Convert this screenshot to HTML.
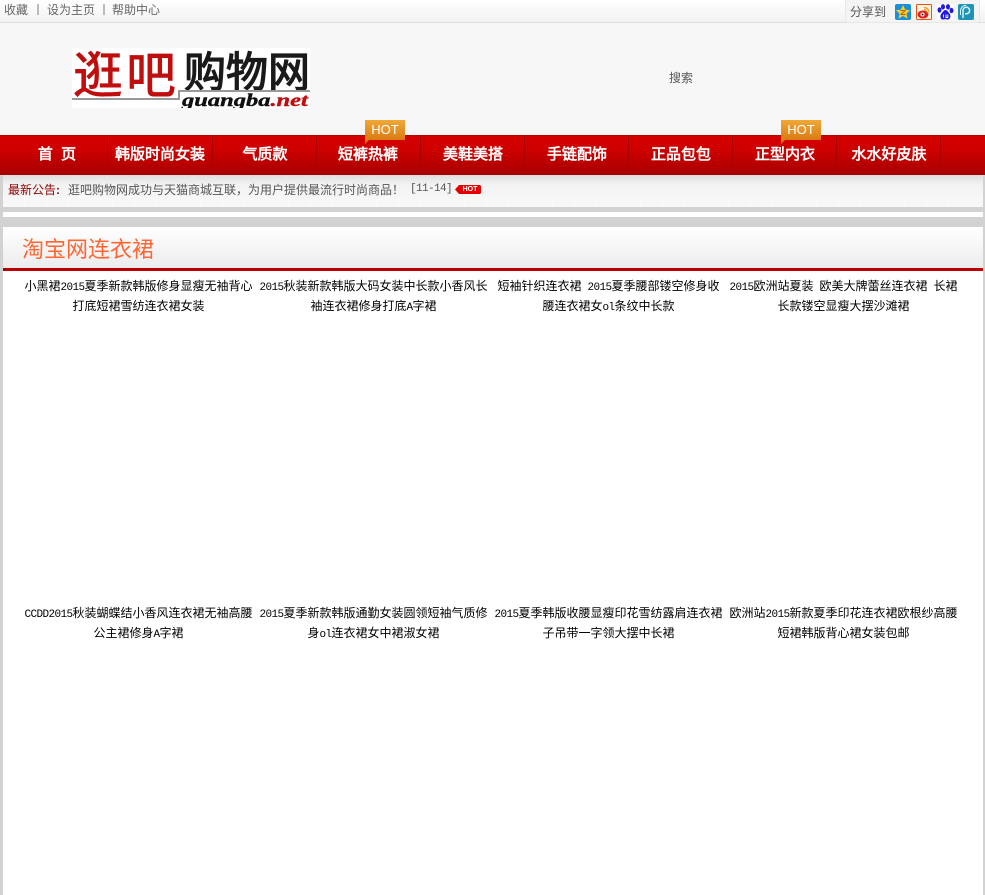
<!DOCTYPE html>
<html><head><meta charset="utf-8"><title>淘宝网连衣裙</title>
<style>
*{margin:0;padding:0;box-sizing:border-box}
html,body{width:985px;height:895px;overflow:hidden;background:#d2d2d2}
body{position:relative;font:12px/20px "WenQuanYi Zen Hei",sans-serif;color:#555}
.a{position:absolute;white-space:nowrap}
.m{font-family:"Liberation Mono",monospace;font-size:11px;letter-spacing:-.6px;line-height:0}
#top{left:0;top:0;width:985px;height:23px;background:linear-gradient(#fff,#f2f2f2);border-bottom:1px solid #ddd}
#head{left:0;top:23px;width:985px;height:112px;background:#f7f7f7}
#nav{left:0;top:135px;width:985px;height:40px;background:linear-gradient(#d40000 0,#cf0000 35%,#a80000 100%);border-top:1px solid #b80000;border-bottom:1px solid #a00}
.n{position:absolute;top:135px;height:40px;width:104px;text-align:center;color:#fff;font-weight:bold;font-size:15px;line-height:39px;white-space:nowrap}
.s{position:absolute;top:136px;width:1px;height:38px;background:#a80000}
.hot{position:absolute;top:120px;width:40px;height:20px;background:linear-gradient(#f0a838,#dc7a12);color:#fff;font:13px/20px "Liberation Sans",sans-serif;text-align:center}
.hot:after{content:"";position:absolute;left:0;top:20px;border-top:4px solid #dc7a12;border-right:4px solid transparent}
#not{left:3px;top:175px;width:980px;height:32px;background:linear-gradient(#dedede 0,#f3f3f3 10px,#f8f8f8 100%)}
#tick{left:3px;top:197px;width:980px;height:8px;background:repeating-linear-gradient(90deg,#f7f7f7 0 21px,#fcfcfc 21px 22px)}
.w{position:absolute;left:3px;width:980px;background:#fff}
#title{left:3px;top:228px;width:980px;height:40px;background:linear-gradient(#fff,#ececec)}
.c{position:absolute;width:235px;text-align:center;color:#000;font-size:12px;line-height:20px;white-space:nowrap}
</style></head><body>
<div class="a" id="top"></div>
<div class="a" style="left:4px;top:0;line-height:20px;color:#666">收藏</div>
<div class="a" style="left:37px;top:4px;width:2px;height:11px;background:#bbb"></div>
<div class="a" style="left:47px;top:0;line-height:20px;color:#666">设为主页</div>
<div class="a" style="left:103px;top:4px;width:2px;height:11px;background:#bbb"></div>
<div class="a" style="left:112px;top:0;line-height:20px;color:#666">帮助中心</div>

<div class="a" style="left:845px;top:0;width:135px;height:23px;background:#f4f4f4;border:1px solid #e8e8e8;border-top:0;border-radius:0 0 3px 3px"></div>
<div class="a" style="left:850px;top:2px;color:#555">分享到</div>
<svg class="a" style="left:895px;top:4px" width="80" height="17" viewBox="0 0 80 17">
<rect x="0" y="0" width="16" height="16" rx="2" fill="#1a8fd8"/><path d="M8 1l2.200 4.600 5 .6-3.700 3.400 1 5L8 12l-4.500 2.600 1-5L.8 6.200l5-.6z" fill="#f7cb2e"/><path d="M5.500 6h5v1L7 10h3.500v1h-5v-1L9 7H5.500z" fill="#a8651a"/>
<rect x="21.500" y=".5" width="15" height="15" rx="1" fill="#fff3e0" stroke="#e0561a"/><ellipse cx="28" cy="10.500" rx="5.500" ry="4" fill="#d8231f"/><circle cx="27.500" cy="10.500" r="2" fill="#fff"/><circle cx="27.500" cy="10.500" r="1" fill="#222"/><path d="M29 3.500a5 5 0 0 1 5 5M29 5.500a3 3 0 0 1 3 3" fill="none" stroke="#f09a1a" stroke-width="1.200"/>
<rect x="42" y="0" width="17" height="16" fill="#fff"/><ellipse cx="44.500" cy="6" rx="2" ry="2.700" fill="#2319dc"/><ellipse cx="48" cy="2.800" rx="2" ry="2.700" fill="#2319dc"/><ellipse cx="53" cy="2.800" rx="2" ry="2.700" fill="#2319dc"/><ellipse cx="56.500" cy="6.500" rx="2" ry="2.700" fill="#2319dc"/><path d="M50.500 6c2 0 2.500 2 4 3.500 1.800 2 .8 6-1.500 6-1 0-1.500-.4-2.500-.4s-1.700.4-2.700.4c-2.500 0-3.200-4-1.300-6C48 8 48.500 6 50.500 6z" fill="#2319dc"/><path d="M48.500 10.500v3M51 10.500v3h1.800v-3" stroke="#fff" stroke-width=".9" fill="none"/>
<rect x="63" y="0" width="16" height="16" rx="2" fill="#1f93b5"/><path d="M68 14V6.500a3.300 3.300 0 1 1 3.300 3.300h-1.300" fill="none" stroke="#d9f2f8" stroke-width="1.500"/><path d="M65.500 11V6.500a5.800 5.800 0 0 1 5.800-5.300" fill="none" stroke="#d9f2f8" stroke-width="1"/>
</svg>

<div class="a" id="head"></div>
<div class="a" style="left:72px;top:48px;width:238px;height:60px;background:#fff;overflow:hidden">
  <div class="a" style="left:1px;top:-6px;font:500 50px/60px 'Noto Sans CJK SC',sans-serif;letter-spacing:3px;color:#c00d0d">逛吧</div>
  <div class="a" style="left:112px;top:0;font:bold 42px/50px 'WenQuanYi Zen Hei',sans-serif;color:#1a1a1a">购物网</div>
  <div class="a" style="left:0;top:50px;width:108px;height:2px;background:#999"></div>
  <div class="a" style="left:106px;top:42px;width:2px;height:10px;background:#999"></div>
  <div class="a" style="left:106px;top:42px;width:132px;height:2px;background:#999"></div>
  <div class="a" style="left:110px;top:44px;font:italic bold 18px/16px 'Liberation Serif',serif;color:#111;transform:scaleX(1.36);transform-origin:0 0;-webkit-text-stroke:.4px currentColor">guangba<span style="color:#c00d0d">.net</span></div>
</div>
<div class="a" style="left:669px;top:68px;color:#555">搜索</div>

<div class="a" id="nav"></div>
<div class="n" style="left:5px">首&nbsp;&nbsp;页</div><div class="s" style="left:107px"></div>
<div class="n" style="left:108px">韩版时尚女装</div><div class="s" style="left:212px"></div>
<div class="n" style="left:213px">气质款</div><div class="s" style="left:316px"></div>
<div class="n" style="left:316px">短裤热裤</div><div class="s" style="left:420px"></div>
<div class="n" style="left:421px">美鞋美搭</div><div class="s" style="left:524px"></div>
<div class="n" style="left:525px">手链配饰</div><div class="s" style="left:628px"></div>
<div class="n" style="left:629px">正品包包</div><div class="s" style="left:732px"></div>
<div class="n" style="left:733px">正型内衣</div><div class="s" style="left:836px"></div>
<div class="n" style="left:837px">水水好皮肤</div><div class="s" style="left:940px"></div>
<div class="hot" style="left:365px">HOT</div>
<div class="hot" style="left:781px">HOT</div>

<div class="a" id="not"></div>
<div class="a" id="tick"></div>
<div class="a" style="left:8px;top:180px;color:#8b0000">最新公告<b>:</b></div>
<div class="a" style="left:68px;top:180px;color:#555">逛吧购物网成功与天猫商城互联，为用户提供最流行时尚商品！</div>
<div class="a m" style="left:410px;top:179px;color:#555;line-height:20px">[11-14]</div>
<svg class="a" style="left:455px;top:185px" width="26" height="9" viewBox="0 0 26 9"><path d="M0 4.500L4 0h21l1 1v7l-1 1H4z" fill="#e60000"/></svg>
<div class="a" style="left:460px;top:186px;width:20px;font:bold 7px/7px 'Liberation Sans',sans-serif;color:#fff;text-align:center">HOT</div>
<div class="w" style="top:212px;height:5px"></div>
<div class="w" style="top:227px;height:668px"></div>
<div class="a" id="title"></div>
<div class="a" style="left:22px;top:235px;font-size:22px;line-height:30px;color:#ff6633">淘宝网连衣裙</div>
<div class="a" style="left:3px;top:268px;width:980px;height:3px;background:#b80000"></div>

<div class="c" style="left:21px;top:276px">小黑裙<span class="m">2015</span>夏季新款韩版修身显瘦无袖背心<br>打底短裙雪纺连衣裙女装</div>
<div class="c" style="left:256px;top:276px"><span class="m">2015</span>秋装新款韩版大码女装中长款小香风长<br>袖连衣裙修身打底<span class="m">A</span>字裙</div>
<div class="c" style="left:491px;top:276px">短袖针织连衣裙<span class="m"> 2015</span>夏季腰部镂空修身收<br>腰连衣裙女<span class="m">ol</span>条纹中长款</div>
<div class="c" style="left:726px;top:276px"><span class="m">2015</span>欧洲站夏装<span class="m"> </span>欧美大牌蕾丝连衣裙<span class="m"> </span>长裙<br>长款镂空显瘦大摆沙滩裙</div>
<div class="c" style="left:21px;top:603px"><span class="m">CCDD2015</span>秋装蝴蝶结小香风连衣裙无袖高腰<br>公主裙修身<span class="m">A</span>字裙</div>
<div class="c" style="left:256px;top:603px"><span class="m">2015</span>夏季新款韩版通勤女装圆领短袖气质修<br>身<span class="m">ol</span>连衣裙女中裙淑女裙</div>
<div class="c" style="left:491px;top:603px"><span class="m">2015</span>夏季韩版收腰显瘦印花雪纺露肩连衣裙<br>子吊带一字领大摆中长裙</div>
<div class="c" style="left:726px;top:603px">欧洲站<span class="m">2015</span>新款夏季印花连衣裙欧根纱高腰<br>短裙韩版背心裙女装包邮</div>
</body></html>
